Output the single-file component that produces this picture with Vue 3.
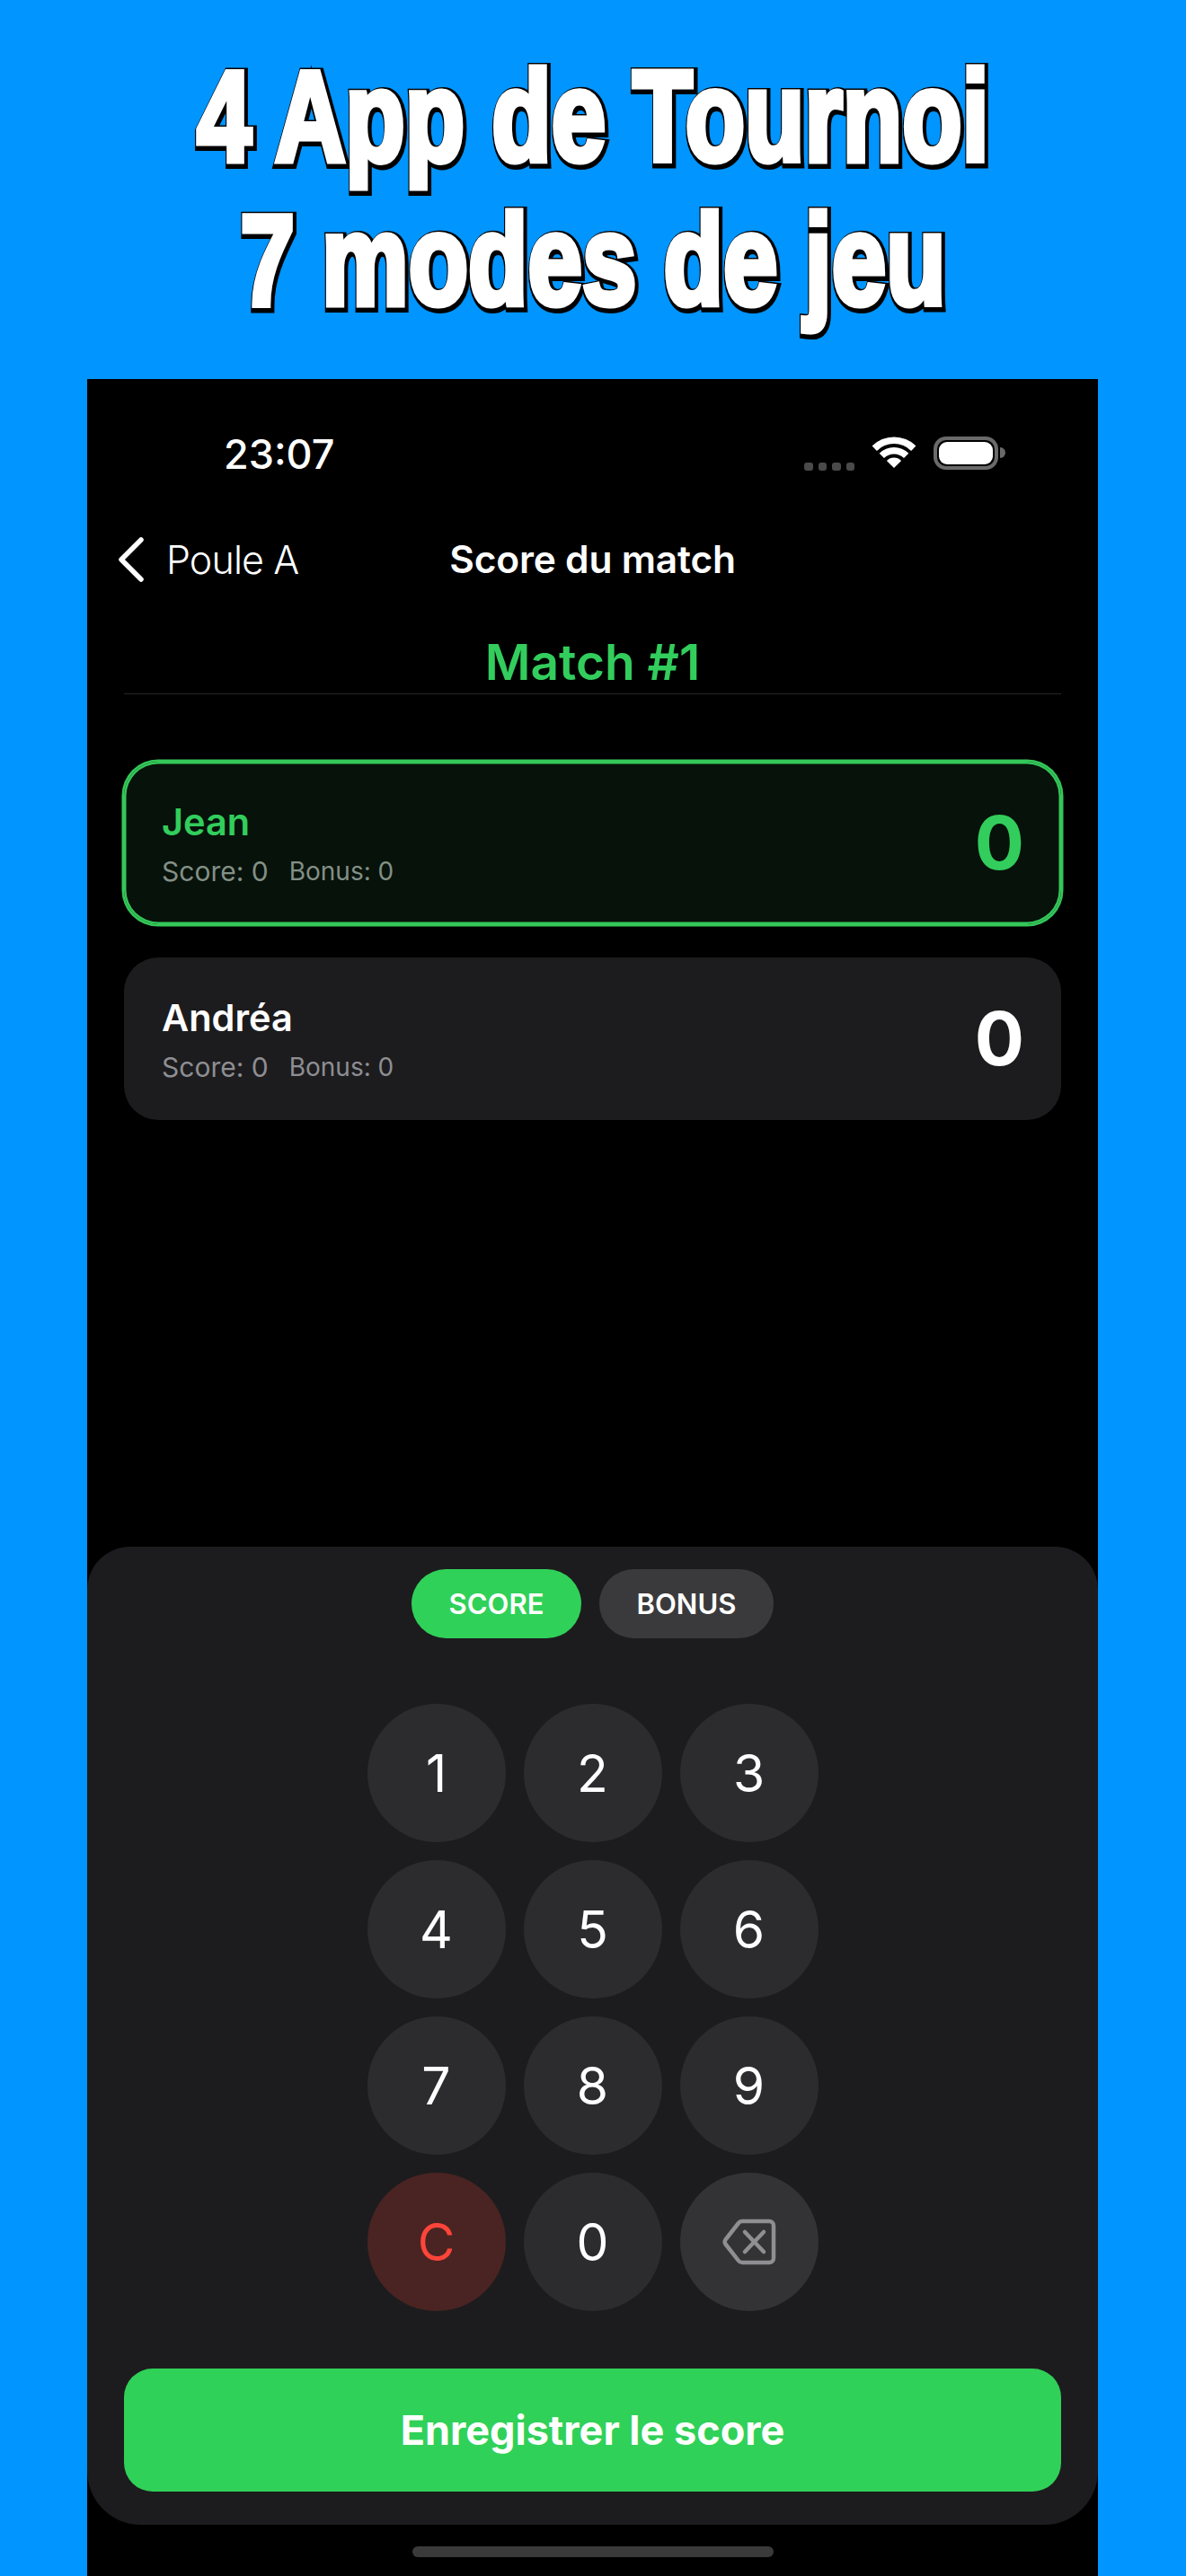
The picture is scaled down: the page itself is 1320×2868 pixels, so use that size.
<template>
	<div class="page">
		<header class="promo">
			<p class="promo-line" data-text="4 App de Tournoi"><span>4 App de Tournoi</span></p>
			<p class="promo-line" data-text="7 modes de jeu"><span>7 modes de jeu</span></p>
		</header>

		<main class="phone">
			<div class="status">
				<span class="time">23:07</span>
				<div class="status-icons">
					<div class="dots"><i v-for="n in 4" :key="n"></i></div>
					<svg class="wifi" width="50" height="35" viewBox="-1 0 50 35">
						<path d="M-.4 10.6A34.5 34.5 0 0 1 48.4 10.6L43.1 15.9A27 27 0 0 0 4.9 15.9Z" />
						<path d="M7.7 18.7A23 23 0 0 1 40.3 18.7L35 24A15.5 15.5 0 0 0 13 24Z" />
						<path d="M15.9 26.9A11.5 11.5 0 0 1 32.1 26.9L24 35Z" />
					</svg>
					<div class="battery"><b></b></div>
					<div class="battery-cap"></div>
				</div>
			</div>

			<nav class="nav">
				<div class="back">
					<svg width="30" height="50" viewBox="0 0 30 50" fill="none" stroke="#fff" stroke-width="5.5" stroke-linecap="round" stroke-linejoin="round">
						<path d="M26 3 4 25l22 22" />
					</svg>
					<span>Poule A</span>
				</div>
				<h1>Score du match</h1>
				<div></div>
			</nav>

			<h2 class="match">Match #1</h2>

			<ul class="players">
				<li v-for="p in players" :key="p.name" class="player" :class="{ active: p.active }">
					<div>
						<p class="name">{{ p.name }}</p>
						<p class="sub"><span>Score: 0</span><span class="bonus">Bonus: 0</span></p>
					</div>
					<span class="total">0</span>
				</li>
			</ul>

			<section class="panel">
				<div class="tabs">
					<button class="tab on">SCORE</button>
					<button class="tab">BONUS</button>
				</div>
				<div class="keys">
					<button v-for="k in digits" :key="k" class="key">{{ k }}</button>
					<button class="key clear">C</button>
					<button class="key">0</button>
					<button class="key del">
						<svg width="60" height="52" viewBox="0 0 60 52" fill="none" stroke="#8e8e93" stroke-width="4.5" stroke-linecap="round" stroke-linejoin="round">
							<path d="M22 3H52a5 5 0 0 1 5 5V44a5 5 0 0 1-5 5H22a5 5 0 0 1-4-2L3.500 28.500a4.500 4.500 0 0 1 0-5L18 5a5 5 0 0 1 4-2Z" />
							<path d="M25 15 46 37M46 15 25 37" />
						</svg>
					</button>
				</div>
				<button class="save">Enregistrer le score</button>
			</section>

			<div class="home"><i></i></div>
		</main>
	</div>
</template>

<script setup>
const digits = [1, 2, 3, 4, 5, 6, 7, 8, 9];
const players = [
	{ name: 'Jean', active: true },
	{ name: 'Andréa', active: false }
];
</script>

<style>
html, body {
	margin: 0;
	background: #0095ff;
}
</style>

<style scoped>
.page {
	width: 1320px;
	height: 2868px;
	background: #0095ff;
	display: flex;
	flex-direction: column;
	font-family: Inter, "Liberation Sans", sans-serif;
	color: #fff;
	overflow: hidden;
}

.promo {
	height: 422px;
	flex: none;
	padding-top: 50px;
	box-sizing: border-box;
}

.promo-line {
	margin: 0;
	height: 160px;
	line-height: 160px;
	text-align: center;
	font-family: "Liberation Sans", Arial, sans-serif;
	font-weight: 700;
	font-size: 143px;
	white-space: nowrap;
	position: relative;
	transform: scaleX(0.76);
	transform-origin: 660px 0;
}

.promo-line span {
	position: relative;
	color: #fff;
	-webkit-text-stroke: 7px #fff;
}

.promo-line::before {
	content: attr(data-text);
	position: absolute;
	left: 2px;
	right: -2px;
	top: 2px;
	color: #000;
	-webkit-text-stroke: 14px #000;
}

.phone {
	flex: 1;
	margin: 0 98px 0 97px;
	background: #000;
	display: flex;
	flex-direction: column;
}

.status {
	height: 138px;
	flex: none;
	display: flex;
	justify-content: space-between;
	align-items: flex-start;
	padding: 62px 103px 0 152px;
	box-sizing: border-box;
}

.time {
	font-size: 45px;
	font-weight: 500;
	line-height: 44px;
}

.status-icons {
	display: flex;
	align-items: flex-start;
	margin-top: 2px;
}

.dots {
	display: flex;
	gap: 6px;
	margin: 29px 19px 0 0;
}

.dots i {
	width: 9.500px;
	height: 9px;
	border-radius: 3px;
	background: #4a4a4a;
}

.wifi {
	fill: #fff;
	margin-right: 19px;
}

.battery {
	width: 72px;
	height: 37px;
	box-sizing: border-box;
	border: 4.500px solid #6a6a6a;
	border-radius: 14px;
	padding: 2px;
}

.battery b {
	display: block;
	height: 100%;
	background: #fff;
	border-radius: 9px;
}

.battery-cap {
	width: 6px;
	height: 12px;
	margin: 12px 0 0 2px;
	background: #6a6a6a;
	border-radius: 0 6px 6px 0;
}

.nav {
	height: 125px;
	flex: none;
	display: grid;
	grid-template-columns: 1fr auto 1fr;
	align-items: center;
	padding: 0 34px;
	box-sizing: border-box;
}

.back {
	display: flex;
	align-items: center;
	gap: 24px;
	font-size: 43px;
	font-weight: 300;
	letter-spacing: -.9px;
}

.nav h1 {
	margin: 0;
	font-size: 42.500px;
	font-weight: 600;
	letter-spacing: -.2px;
}

.match {
	margin: 0 41px;
	height: 87px;
	line-height: 104px;
	flex: none;
	text-align: center;
	color: #32cd5c;
	font-size: 55px;
	font-weight: 600;
	border-bottom: 1.500px solid #262628;
}

.players {
	list-style: none;
	margin: 75px 41px 0;
	padding: 0;
	display: flex;
	flex-direction: column;
	gap: 37px;
}

.player {
	height: 181px;
	padding: 0 41px 0 42px;
	box-sizing: border-box;
	border-radius: 38px;
	background: #1c1c1e;
	display: flex;
	justify-content: space-between;
	align-items: center;
}

.player.active {
	background: #07120a;
	box-shadow: 0 0 0 2.500px #34c759, inset 0 0 0 2.500px #34c759;
}

.name {
	margin: 0;
	font-size: 41.500px;
	font-weight: 600;
	line-height: 52px;
}

.active .name,
.active .total {
	color: #32cd5c;
}

.sub {
	margin: 10px 0 0;
	display: flex;
	gap: 23px;
	font-size: 30px;
	line-height: 38px;
	color: #8e8e93;
}

.sub .bonus {
	font-size: 28px;
}

.active .sub {
	color: #829086;
}

.total {
	font-size: 82px;
	font-weight: 700;
}

.panel {
	margin-top: auto;
	height: 1089px;
	flex: none;
	box-sizing: border-box;
	background: #1c1c1e;
	border-radius: 48px 48px 60px 60px;
	padding: 25px 41px 0;
	display: flex;
	flex-direction: column;
	align-items: center;
}

button {
	border: 0;
	color: #fff;
	font-family: inherit;
	padding: 0;
}

.tabs {
	display: flex;
	gap: 20px;
}

.tab {
	height: 77px;
	width: 194px;
	border-radius: 39px;
	background: #3a3a3c;
	font-size: 31px;
	font-weight: 600;
}

.tab.on {
	width: 189px;
	background: #30d158;
}

.keys {
	margin-top: 73px;
	display: grid;
	grid-template-columns: repeat(3, 154px);
	grid-auto-rows: 154px;
	gap: 20px;
}

.key {
	border-radius: 50%;
	background: #2c2c2e;
	font-size: 57px;
	font-weight: 400;
	display: flex;
	align-items: center;
	justify-content: center;
}

.key.clear {
	background: #4a2422;
	color: #ff453a;
}

.key.del {
	background: #333335;
}

.save {
	margin-top: 64px;
	width: 100%;
	height: 137px;
	flex: none;
	border-radius: 32px;
	background: #30d158;
	font-size: 45px;
	font-weight: 700;
}

.home {
	height: 57px;
	flex: none;
	display: flex;
	justify-content: center;
	padding-top: 24px;
	box-sizing: border-box;
}

.home i {
	width: 402px;
	height: 12px;
	border-radius: 6px;
	background: #3a3a3a;
}
</style>
